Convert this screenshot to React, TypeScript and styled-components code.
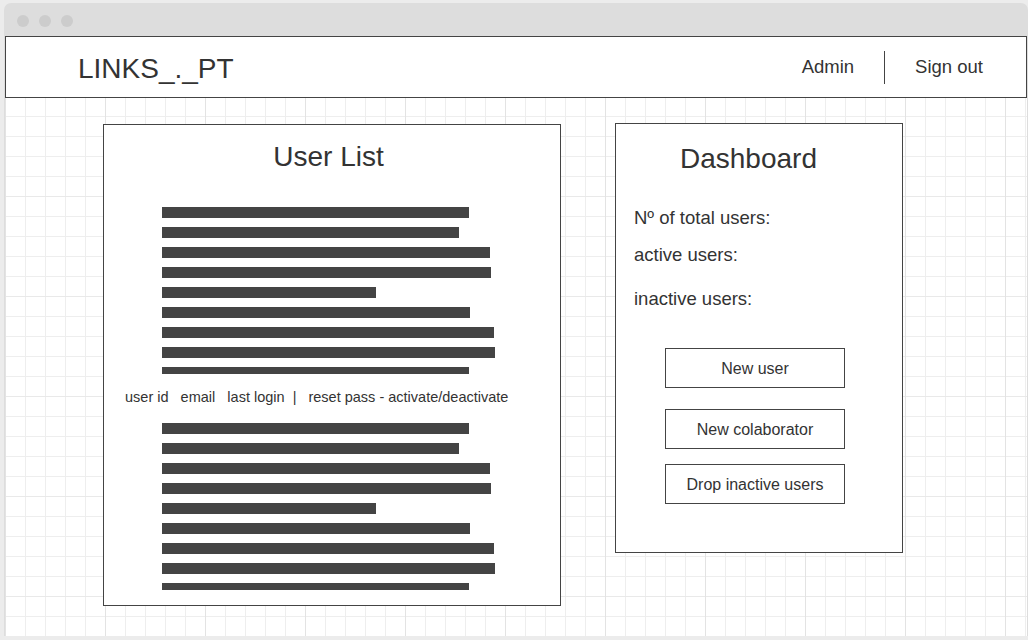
import React from "react";
import styled, { createGlobalStyle } from "styled-components";

const GlobalStyle = createGlobalStyle`
  html, body {
    margin: 0;
    padding: 0;
    background: #ececec;
  }
  body {
    font-family: "Liberation Sans", Arial, sans-serif;
    color: #333333;
  }
  * { box-sizing: border-box; }
`;

const Window = styled.div`
  margin: 3px 0 0 4px;
  width: 1024px;
  height: 633px;
  display: flex;
  flex-direction: column;
  background: #dddddd;
  border-radius: 7px 7px 0 0;
  overflow: hidden;
`;

const TitleBar = styled.div`
  height: 33px;
  flex: none;
  display: flex;
  align-items: center;
  gap: 10px;
  padding: 2px 0 0 13px;
`;

const Dot = styled.span`
  width: 12px;
  height: 12px;
  border-radius: 50%;
  background: #cccccc;
`;

const Content = styled.div`
  flex: 1;
  display: flex;
  flex-direction: column;
  padding: 0 1px;
`;

const Header = styled.header`
  height: 62px;
  flex: none;
  background: #ffffff;
  border: 1px solid #444444;
  display: flex;
  align-items: center;
  justify-content: space-between;
  padding: 0 43px 0 72px;
`;

const Logo = styled.div`
  font-size: 28px;
  line-height: 32px;
  padding-top: 3px;
  color: #333333;
`;

const Nav = styled.nav`
  display: flex;
  align-items: center;
  gap: 30px;
`;

const NavLink = styled.span`
  font-size: 18.5px;
  line-height: 20px;
  color: #333333;
`;

const NavDivider = styled.span`
  width: 1px;
  height: 33px;
  background: #444444;
`;

const Main = styled.main`
  flex: 1;
  display: flex;
  align-items: flex-start;
  gap: 54px;
  padding: 25px 0 0 98px;
  background-color: #ffffff;
  background-image:
    linear-gradient(to right, #e3e3e3 1px, transparent 1px),
    linear-gradient(to bottom, #e9e9e9 1px, transparent 1px),
    linear-gradient(to right, #eeeeee 1px, transparent 1px),
    linear-gradient(to bottom, #eeeeee 1px, transparent 1px);
  background-size: 100px 100px, 100px 100px, 20px 20px, 20px 20px;
  background-position: 0 0, 0 98px, 0 18px, 0 18px;
`;

const Card = styled.section<{ $width: number; $height: number; $offset?: number }>`
  width: ${(p) => p.$width}px;
  height: ${(p) => p.$height}px;
  margin-top: ${(p) => p.$offset ?? 0}px;
  background: #ffffff;
  border: 1px solid #444444;
  display: flex;
  flex-direction: column;
`;

const CardTitle = styled.h2<{ $top: number; $shift: number }>`
  margin: ${(p) => p.$top}px 0 0 0;
  padding-right: ${(p) => p.$shift}px;
  font-size: 28px;
  line-height: 32px;
  font-weight: normal;
  text-align: center;
  color: #333333;
`;

const Lines = styled.div<{ $top: number }>`
  margin: ${(p) => p.$top}px 0 0 58px;
  display: flex;
  flex-direction: column;
  gap: 9px;
`;

const Bar = styled.div<{ $w: number; $h?: number }>`
  width: ${(p) => p.$w}px;
  height: ${(p) => p.$h ?? 11}px;
  background: #444444;
`;

const ColumnsLabel = styled.div`
  margin: 15px 0 0 21px;
  font-size: 14.5px;
  line-height: 16px;
  white-space: pre;
  color: #333333;
`;

const Stat = styled.div<{ $top: number }>`
  margin: ${(p) => p.$top}px 0 0 18px;
  font-size: 18.5px;
  line-height: 20px;
  color: #333333;
`;

const ActionButton = styled.button<{ $top: number }>`
  margin: ${(p) => p.$top}px 0 0 49px;
  width: 180px;
  height: 40px;
  background: #ffffff;
  border: 1px solid #444444;
  border-radius: 0;
  font-family: "Liberation Sans", Arial, sans-serif;
  font-size: 16px;
  color: #333333;
  padding: 2px 0 0 0;
  cursor: pointer;
`;

const widths = [307, 297, 328, 329, 214, 308, 332, 333, 307];

const TextBlock: React.FC<{ top: number }> = ({ top }) => (
  <Lines $top={top}>
    {widths.map((w, i) => (
      <Bar key={i} $w={w} $h={i === widths.length - 1 ? 7 : 11} />
    ))}
  </Lines>
);

export default function App() {
  return (
    <>
      <GlobalStyle />
      <Window>
        <TitleBar>
          <Dot />
          <Dot />
          <Dot />
        </TitleBar>
        <Content>
          <Header>
            <Logo>LINKS_._PT</Logo>
            <Nav>
              <NavLink>Admin</NavLink>
              <NavDivider />
              <NavLink>Sign out</NavLink>
            </Nav>
          </Header>
          <Main>
            <Card $width={458} $height={482} $offset={1}>
              <CardTitle $top={16} $shift={7}>User List</CardTitle>
              <TextBlock top={34} />
              <ColumnsLabel>{"user id   email   last login  |   reset pass - activate/deactivate"}</ColumnsLabel>
              <TextBlock top={18} />
            </Card>
            <Card $width={288} $height={430}>
              <CardTitle $top={19} $shift={21}>Dashboard</CardTitle>
              <Stat $top={33}>Nº of total users:</Stat>
              <Stat $top={17}>active users:</Stat>
              <Stat $top={24}>inactive users:</Stat>
              <ActionButton $top={39}>New user</ActionButton>
              <ActionButton $top={21}>New colaborator</ActionButton>
              <ActionButton $top={15}>Drop inactive users</ActionButton>
            </Card>
          </Main>
        </Content>
      </Window>
    </>
  );
}
